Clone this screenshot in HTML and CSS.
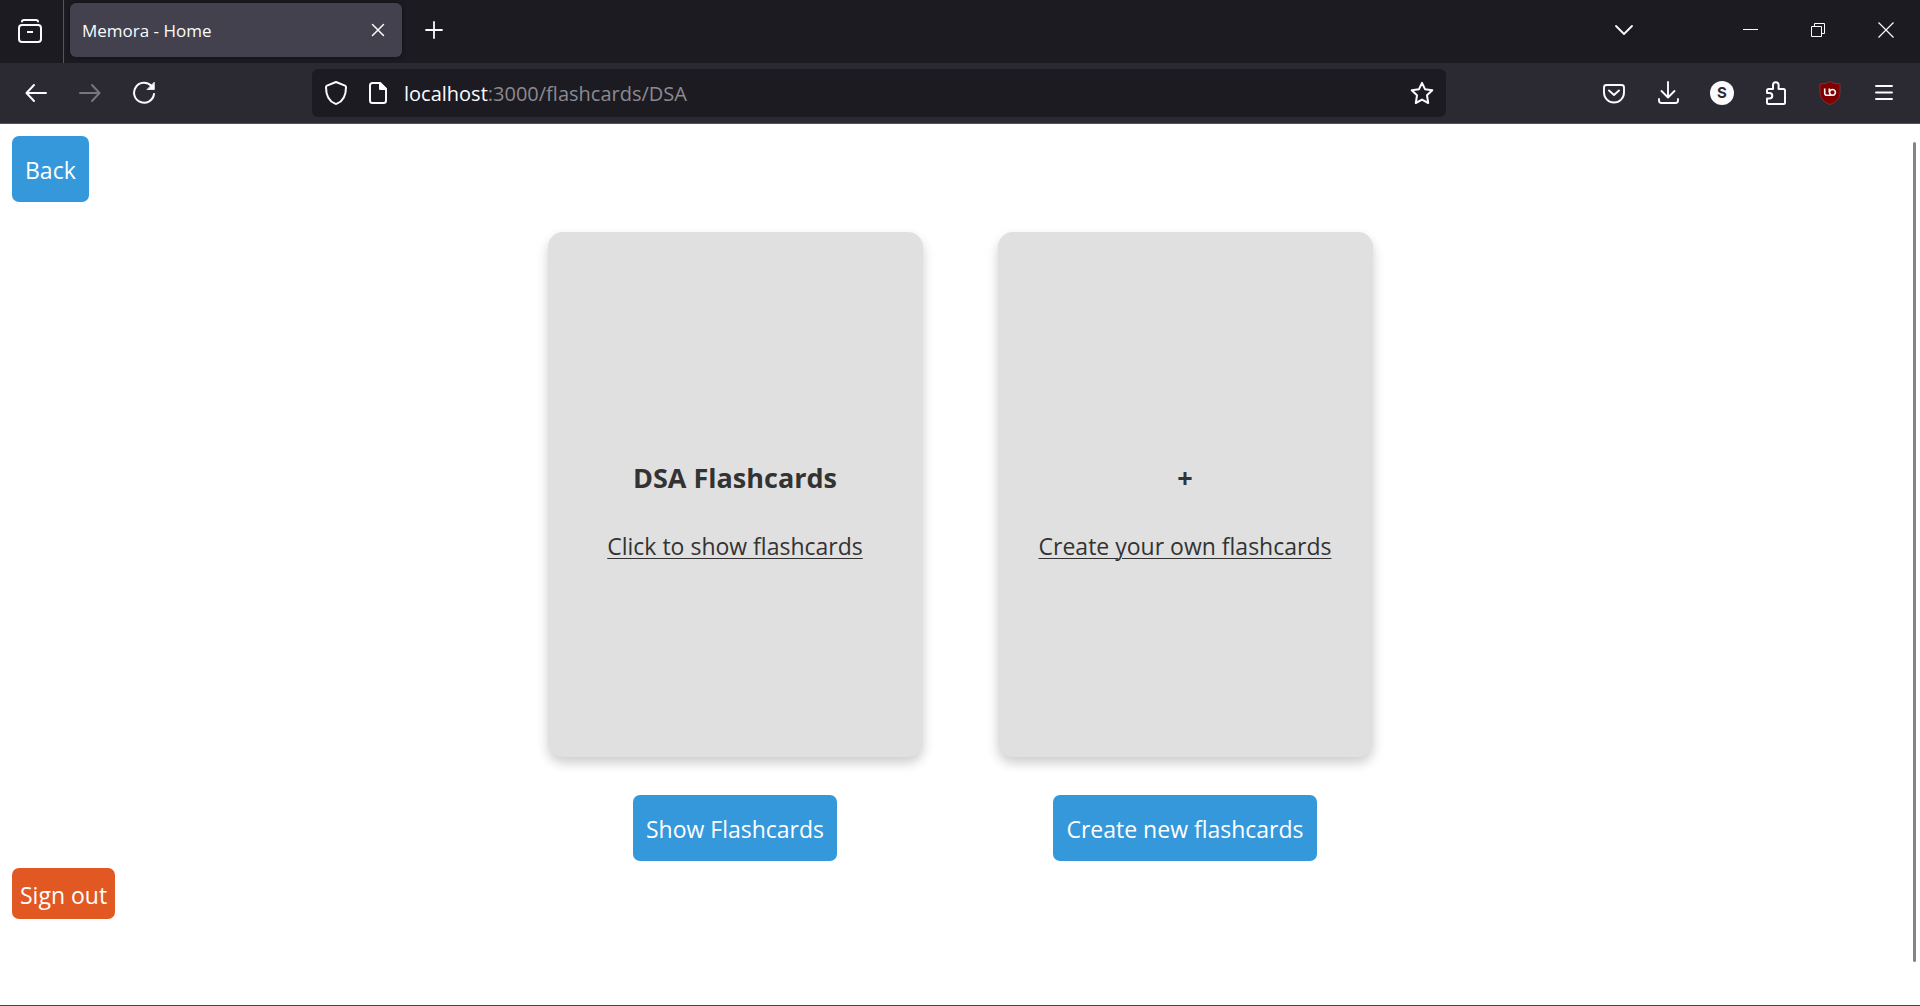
FILE: index.html
```html
<!DOCTYPE html>
<html lang="en">
<head>
<meta charset="utf-8">
<meta name="viewport" content="width=device-width, initial-scale=1">
<title>Memora - Home</title>
<link rel="stylesheet" href="styles.css">
</head>
<body>
<div class="window">
  <header class="tabstrip">
    <button class="icon-btn view-btn" aria-label="Recent browsing">
      <svg width="24" height="24" viewBox="0 0 24 24" fill="none" stroke="currentColor" stroke-width="2" stroke-linecap="round"><path d="M4 2.500C4 1.500 4.800 1 6 1H18C19.200 1 20 1.500 20 2.500"/><rect x="1" y="6" width="22" height="17" rx="3"/><path d="M9 13H15" stroke-linecap="butt"/></svg>
    </button>
    <div class="tab">
      <span class="tab-title">Memora - Home</span>
      <button class="icon-btn" aria-label="Close tab"><svg width="14" height="14" viewBox="0 0 14 14" fill="none" stroke="currentColor" stroke-width="1.500" stroke-linecap="round"><path d="M1.500 1.500 12.500 12.500M12.500 1.500 1.500 12.500"/></svg></button>
    </div>
    <button class="icon-btn new-tab" aria-label="New tab"><svg width="18" height="18" viewBox="0 0 18 18" fill="none" stroke="currentColor" stroke-width="1.800" stroke-linecap="round"><path d="M9 1V17M1 9H17"/></svg></button>
    <div class="window-controls">
      <button class="icon-btn tab-list" aria-label="List all tabs"><svg width="20" height="12" viewBox="0 0 20 12" fill="none" stroke="currentColor" stroke-width="1.800" stroke-linecap="round" stroke-linejoin="round"><path d="M2 2 10 10 18 2"/></svg></button>
      <button class="icon-btn" aria-label="Minimize"><svg width="16" height="16" viewBox="0 0 16 16"><path d="M1 7H16V8H1Z" fill="currentColor"/></svg></button>
      <button class="icon-btn" aria-label="Restore"><svg width="14" height="14" viewBox="0 0 14 14" fill="none" stroke="currentColor"><path d="M.5 3.500H10.500V13.500H.5ZM3.500 3V.5H13.500V10.500H11"/></svg></button>
      <button class="icon-btn" aria-label="Close"><svg width="16" height="16" viewBox="0 0 16 16" fill="none" stroke="currentColor" stroke-width="1.200"><path d="M.5.5 15.500 15.500M15.500.5.5 15.500"/></svg></button>
    </div>
  </header>

  <nav class="toolbar" aria-label="Navigation">
    <div class="nav-buttons">
      <button class="icon-btn" aria-label="Back"><svg width="24" height="24" viewBox="0 0 24 24" fill="none" stroke="currentColor" stroke-width="2" stroke-linecap="round" stroke-linejoin="round"><path d="M22 12H3M10 4 2.500 12 10 20"/></svg></button>
      <button class="icon-btn" aria-label="Forward" disabled><svg width="24" height="24" viewBox="0 0 24 24" fill="none" stroke="currentColor" stroke-width="2" stroke-linecap="round" stroke-linejoin="round"><path d="M2 12H21M14 4 21.500 12 14 20"/></svg></button>
      <button class="icon-btn" aria-label="Reload"><svg width="24" height="24" viewBox="0 0 24 24" fill="none" stroke="currentColor" stroke-width="2" stroke-linecap="round"><path d="M22 13A10 10 0 1 1 19.500 5"/><path d="M22.300 1.500V8.500H15.300Z" fill="currentColor" stroke-width=".8" stroke-linejoin="round"/></svg></button>
    </div>
    <div class="urlbar">
      <div class="site-info">
        <svg width="24" height="24" viewBox="0 0 24 24" fill="none" stroke="currentColor" stroke-width="2" stroke-linejoin="round"><path d="M12 1 21 4.600Q22 5 22 6.200C22 15.500 17.500 20.800 12.900 22.700Q12 23.100 11.100 22.700C6.500 20.800 2 15.500 2 6.200Q2 5 3 4.600Z"/></svg>
        <svg width="24" height="24" viewBox="0 0 24 24" fill="none" stroke="currentColor" stroke-width="2" stroke-linejoin="round"><path d="M6 2H14L20 8V19.500Q20 22 17.500 22H6.500Q4 22 4 19.500V4.500Q4 2 6.500 2Z"/><path d="M14 2V8H20Z" fill="currentColor"/></svg>
      </div>
      <span class="address">localhost<span class="path">:3000/flashcards/DSA</span></span>
      <button class="icon-btn" aria-label="Bookmark this page"><svg width="24" height="24" viewBox="0 0 24 24" fill="none" stroke="currentColor" stroke-width="2" stroke-linejoin="round"><path d="M12 1.800 15 8.200 22.300 9.200 17 14.300 18.200 22 12 18.600 5.800 22 7 14.300 1.700 9.200 9 8.200Z"/></svg></button>
    </div>
    <div class="tools">
      <button class="icon-btn" aria-label="Save to Pocket"><svg width="24" height="24" viewBox="0 0 24 24" fill="none" stroke="currentColor" stroke-width="1.900" stroke-linecap="round" stroke-linejoin="round"><path d="M4.500 4H19.500Q22 4 22 6.500V11.500A10 10 0 0 1 2 11.500V6.500Q2 4 4.500 4Z"/><path d="M7 9.500 12 14 17 9.500"/></svg></button>
      <button class="icon-btn" aria-label="Downloads"><svg width="24" height="24" viewBox="0 0 24 24" fill="none" stroke="currentColor" stroke-width="1.900" stroke-linecap="round" stroke-linejoin="round"><path d="M12 1V16M5.500 10 12 16.500 18.500 10M3 18V19.500Q3 22 5.500 22H19.500Q22 22 22 19.500V18"/></svg></button>
      <button class="icon-btn account" aria-label="Account">S</button>
      <button class="icon-btn" aria-label="Extensions"><svg width="24" height="24" viewBox="0 0 24 24" fill="none" stroke="currentColor" stroke-width="2" stroke-linejoin="round"><path d="M3 12V9.500Q3 8 4.500 8H9V4A2.800 2.800 0 0 1 14.600 4V8H19.500Q21 8 21 9.500V21.500Q21 23 19.500 23H4.500Q3 23 3 21.500V17.500H5.500A2.750 2.750 0 0 0 5.500 12Z"/></svg></button>
      <button class="icon-btn" aria-label="Content blocker"><svg width="24" height="24" viewBox="0 0 24 24" fill="none"><path d="M12 .5Q15 3 22 3V11C22 18 17 21.500 12 23.500 7 21.500 2 18 2 11V3Q9 3 12 .5Z" fill="#800000" stroke="#a04045" stroke-width=".6"/><path d="M6.700 7.500V12Q6.700 14.300 9 14.300H12.500M11.300 7.500V11.500M14.500 8.500A2.900 2.900 0 1 1 14.490 8.500Z" stroke="#fff" stroke-width="1.600"/></svg></button>
      <button class="icon-btn" aria-label="Menu"><svg width="24" height="24" viewBox="0 0 24 24" fill="none" stroke="currentColor" stroke-width="1.900" stroke-linecap="round"><path d="M4 5H20M4 11.500H20M4 18H20"/></svg></button>
    </div>
  </nav>

  <main class="page">
    <button class="btn">Back</button>
    <div class="decks">
      <section class="deck">
        <div class="card">
          <h2>DSA Flashcards</h2>
          <a href="#show">Click to show flashcards</a>
        </div>
        <button class="btn">Show Flashcards</button>
      </section>
      <section class="deck">
        <div class="card">
          <h2>+</h2>
          <a href="#create">Create your own flashcards</a>
        </div>
        <button class="btn">Create new flashcards</button>
      </section>
    </div>
    <button class="btn btn-signout">Sign out</button>
    <div class="scroll-thumb"></div>
  </main>
</div>
</body>
</html>
```
FILE: styles.css
```css
* { box-sizing: border-box; }

body {
  margin: 0;
  font-family: "Open Sans", "Noto Sans", sans-serif;
  color: #333;
  background: #fff;
}

button {
  margin: 0;
  border: 0;
  font-family: inherit;
}

svg { display: block; flex: none; }

.window {
  display: flex;
  flex-direction: column;
  min-height: 100vh;
  border-bottom: 1px solid #444;
}

.icon-btn {
  display: flex;
  align-items: center;
  justify-content: center;
  flex: none;
  padding: 0;
  background: none;
  color: #fbfbfe;
}

.icon-btn:disabled { color: #77767c; }

/* Tab strip */
.tabstrip {
  display: flex;
  align-items: center;
  height: 63px;
  padding-bottom: 3px;
  background: #1c1b22;
  color: #fbfbfe;
}

.view-btn {
  width: 64px;
  height: 63px;
  margin-bottom: -3px;
  padding-right: 3px;
  padding-bottom: 2px;
  border-right: 1px solid #56555d;
}

.tab {
  display: flex;
  align-items: center;
  justify-content: space-between;
  width: 332px;
  height: 54px;
  margin-left: 6px;
  padding: 0 17px 0 12px;
  border-radius: 6px;
  background: #42414d;
  box-shadow: 0 0 4px rgba(0, 0, 0, 0.5);
}

.tab-title {
  padding-top: 2px;
  font-size: 17px;
  line-height: 24px;
}

.new-tab { margin-left: 23px; }

.window-controls {
  display: flex;
  align-items: center;
  gap: 53px;
  margin-left: auto;
  padding-right: 26px;
}

.tab-list { margin-right: 55px; }

/* Navigation toolbar */
.toolbar {
  display: flex;
  align-items: center;
  justify-content: space-between;
  height: 61px;
  padding: 0 24px;
  border-bottom: 1px solid #56555e;
  background: #2b2a33;
  color: #fbfbfe;
}

.nav-buttons {
  display: flex;
  gap: 30px;
}

.urlbar {
  display: flex;
  align-items: center;
  flex: 0 1 1134px;
  gap: 14px;
  height: 48px;
  padding: 0 12px;
  border-radius: 6px;
  background: #1c1b22;
}

.site-info {
  display: flex;
  gap: 18px;
}

.address {
  flex: 1;
  padding-top: 2px;
  font-size: 20px;
  line-height: 28px;
}

.path { color: #8b8a90; }

.tools {
  display: flex;
  gap: 30px;
}

.account {
  width: 24px;
  height: 24px;
  border-radius: 50%;
  background: #fbfbfe;
  color: #2b2a33;
  font: 700 15px/24px Inter, sans-serif;
}

/* Page content */
.page {
  position: relative;
  display: flex;
  flex-direction: column;
  align-items: flex-start;
  flex: 1;
  padding: 12px;
}

.btn {
  height: 66px;
  padding: 2px 13px 0;
  border-radius: 7px;
  background: #3498db;
  color: #fff;
  font-size: 23px;
  line-height: 32px;
}

.btn-signout {
  height: 51px;
  padding: 2px 8px 0;
  background: #e25822;
}

.decks {
  display: flex;
  justify-content: center;
  gap: 75px;
  width: 100%;
  padding: 30px 0 7px;
}

.deck {
  display: flex;
  flex-direction: column;
  align-items: center;
  gap: 38px;
}

.card {
  display: flex;
  flex-direction: column;
  align-items: center;
  justify-content: center;
  gap: 34px;
  width: 375px;
  height: 525px;
  padding: 62px 15px 30px;
  border-radius: 15px;
  background: #e0e0e0;
  box-shadow: 0 6px 12px rgba(0, 0, 0, 0.2);
  text-align: center;
}

.card h2 {
  margin: 0;
  font-size: 27px;
  line-height: 36px;
}

.card a {
  color: #333;
  font-size: 23px;
  line-height: 32px;
  text-decoration-thickness: 1px;
  text-underline-offset: 3px;
}

/* Overlay scroll bar */
.scroll-thumb {
  position: absolute;
  top: 18px;
  right: 4px;
  bottom: 43px;
  width: 3px;
  border-radius: 2px;
  background: #858585;
}
```
